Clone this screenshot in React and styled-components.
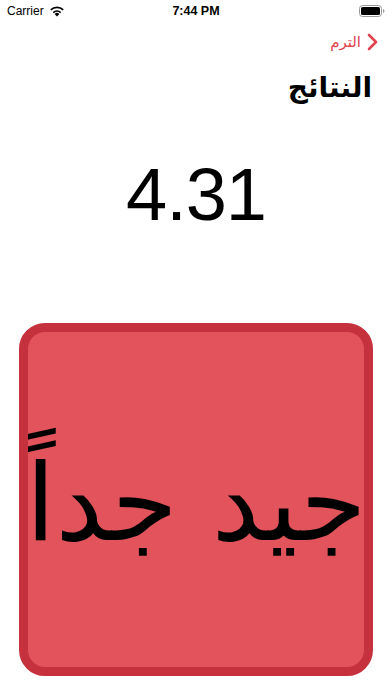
import styled, { createGlobalStyle } from "styled-components";

const GlobalStyle = createGlobalStyle`
  html, body {
    margin: 0;
    padding: 0;
    background: #ffffff;
  }
  body {
    font-family: "Liberation Sans", "DejaVu Sans", sans-serif;
  }
`;

function WifiIcon() {
  return (
    <svg width="16" height="12" viewBox="0 0 16 12">
      <path d="M8 11.5 L5.6 8.9 A3.4 3.4 0 0 1 10.4 8.9 Z" fill="#000" />
      <path d="M3.7 6.9 A6.2 6.2 0 0 1 12.3 6.9 L11.1 8.2 A4.5 4.5 0 0 0 4.9 8.2 Z" fill="#000" />
      <path d="M1.2 4.3 A9.8 9.8 0 0 1 14.8 4.3 L13.6 5.6 A8 8 0 0 0 2.4 5.6 Z" fill="#000" />
    </svg>
  );
}

function BatteryIcon() {
  return (
    <svg width="26" height="12" viewBox="0 0 26 12">
      <rect x="0.5" y="0.5" width="22" height="11" rx="3" fill="none" stroke="#999" />
      <rect x="2" y="2" width="19" height="8" rx="1.6" fill="#000" />
      <path d="M24 4 Q25.5 4.3 25.5 6 Q25.5 7.7 24 8 Z" fill="#999" />
    </svg>
  );
}

function App() {
  return (
    <>
      <GlobalStyle />
      <Screen>
        <StatusBar>
          <Carrier>
            Carrier <WifiIcon />
          </Carrier>
          <Time>7:44 PM</Time>
          <BatteryWrap>
            <BatteryIcon />
          </BatteryWrap>
        </StatusBar>
        <NavBar>
          <BackButton>
            <svg width="11" height="18" viewBox="0 0 11 18">
              <path d="M2 2 L9 9 L2 16" fill="none" stroke="#e0434f" strokeWidth="2.6" strokeLinecap="round" strokeLinejoin="round" />
            </svg>
            <BackText>الترم</BackText>
          </BackButton>
        </NavBar>
        <Title>النتائج</Title>
        <Score>4.31</Score>
        <GradeCard>
          <GradeText>جيد جداً</GradeText>
        </GradeCard>
      </Screen>
    </>
  );
}

const Screen = styled.div`
  width: 392px;
  height: 696px;
  display: flex;
  flex-direction: column;
  overflow: hidden;
`;

const StatusBar = styled.div`
  height: 20px;
  display: flex;
  align-items: center;
  justify-content: space-between;
  padding: 1px 7px 0 7px;
  position: relative;
  font-size: 12px;
`;

const Carrier = styled.div`
  display: flex;
  align-items: center;
  gap: 5px;
  color: #000;
`;

const Time = styled.div`
  position: absolute;
  left: 0;
  right: 0;
  text-align: center;
  font-weight: 700;
  font-size: 12.5px;
`;

const BatteryWrap = styled.div`
  display: flex;
  align-items: center;
`;

const NavBar = styled.div`
  height: 41px;
  display: flex;
  justify-content: flex-end;
  align-items: center;
  padding: 0 14px 0 0;
`;

const BackButton = styled.div`
  display: flex;
  flex-direction: row-reverse;
  align-items: center;
  gap: 6px;
`;

const BackText = styled.span`
  direction: rtl;
  font-family: "DejaVu Sans", sans-serif;
  color: #e0434f;
  font-size: 15px;
`;

const Title = styled.h1`
  margin: 5px 20px 0 0;
  direction: rtl;
  text-align: right;
  font-family: "DejaVu Sans", sans-serif;
  font-weight: 700;
  font-size: 28px;
  line-height: 42px;
  color: #000;
`;

const Score = styled.div`
  margin-top: 42px;
  text-align: center;
  font-family: "Liberation Sans", sans-serif;
  font-weight: 400;
  font-size: 74px;
  line-height: 88px;
  color: #000;
  letter-spacing: -1px;
`;

const GradeCard = styled.div`
  margin: 84px 19px 0 19px;
  height: 353px;
  box-sizing: border-box;
  border: 9px solid #c5313d;
  border-radius: 26px;
  background: #e2535b;
  display: flex;
  align-items: center;
  justify-content: center;
  overflow: hidden;
`;

const GradeText = styled.div`
  direction: rtl;
  font-family: "DejaVu Sans", sans-serif;
  font-size: 107px;
  white-space: nowrap;
  color: #000;
  line-height: 1;
  margin-top: 8px;
`;

export default App;
